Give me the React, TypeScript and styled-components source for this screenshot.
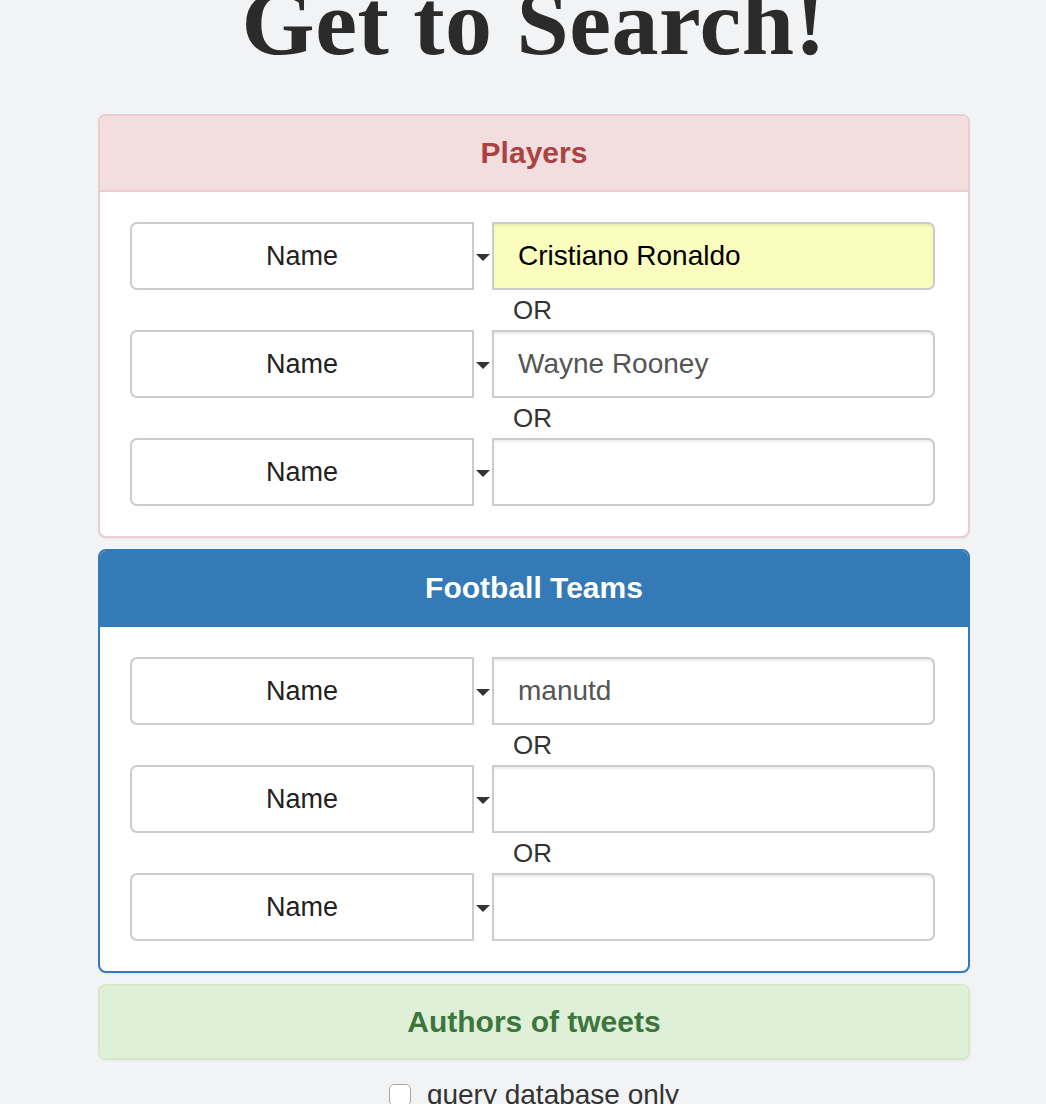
import React from 'react';
import styled, { createGlobalStyle } from 'styled-components';

type Tone = 'danger' | 'primary' | 'success';

const tones: Record<Tone, { border: string; head: string; text: string }> = {
  danger: { border: '#ebccd1', head: '#f2dede', text: '#a94442' },
  primary: { border: '#337ab7', head: '#337ab7', text: '#ffffff' },
  success: { border: '#d6e9c6', head: '#dff0d8', text: '#3c763d' },
};

interface Row {
  value: string;
  autofill?: boolean;
}

const players: Row[] = [{ value: 'Cristiano Ronaldo', autofill: true }, { value: 'Wayne Rooney' }, { value: '' }];
const teams: Row[] = [{ value: 'manutd' }, { value: '' }, { value: '' }];

const SearchRows: React.FC<{ rows: Row[] }> = ({ rows }) => (
  <Body>
    {rows.map((row, i) => (
      <React.Fragment key={i}>
        {i > 0 && <Or>OR</Or>}
        <FieldRow>
          <Select>Name</Select>
          <Caret />
          <Input $autofill={row.autofill} defaultValue={row.value} />
        </FieldRow>
      </React.Fragment>
    ))}
  </Body>
);

const App: React.FC = () => {
  return (
    <>
      <GlobalStyle />
      <Page>
        <Title>Get to Search!</Title>
        <Panel $tone="danger">
          <PanelHeading $tone="danger">Players</PanelHeading>
          <SearchRows rows={players} />
        </Panel>
        <Panel $tone="primary">
          <PanelHeading $tone="primary">Football Teams</PanelHeading>
          <SearchRows rows={teams} />
        </Panel>
        <Panel $tone="success" $collapsed>
          <PanelHeading $tone="success" $collapsed>
            Authors of tweets
          </PanelHeading>
        </Panel>
        <CheckLine>
          <Box type="checkbox" />
          query database only
        </CheckLine>
      </Page>
    </>
  );
};

export default App;

const GlobalStyle = createGlobalStyle`
  html, body {
    margin: 0;
    padding: 0;
    background: #f2f3f5;
  }
  body {
    font-family: "Liberation Sans", Arial, sans-serif;
    color: #333333;
    overflow: hidden;
  }
`;

const Page = styled.div`
  width: 872px;
  margin-left: 98px;
  display: flex;
  flex-direction: column;
`;

const Title = styled.h1`
  margin: -24px 0 46px;
  font-family: "Liberation Serif", "Times New Roman", serif;
  font-size: 94px;
  line-height: 92px;
  font-weight: 700;
  color: #2b2b2b;
  text-align: center;
  letter-spacing: 0.5px;
`;

const Panel = styled.div<{ $tone: Tone; $collapsed?: boolean }>`
  flex-shrink: 0;
  display: flex;
  flex-direction: column;
  border: 2px solid ${(p) => tones[p.$tone].border};
  border-radius: 8px;
  background: #ffffff;
  overflow: hidden;
  margin-bottom: ${(p) => (p.$collapsed ? '20px' : '11px')};
  box-shadow: 0 1px 2px rgba(0, 0, 0, 0.05);
`;

const PanelHeading = styled.div<{ $tone: Tone; $collapsed?: boolean }>`
  height: ${(p) => (p.$collapsed ? '72px' : '74px')};
  display: flex;
  align-items: center;
  justify-content: center;
  background: ${(p) => tones[p.$tone].head};
  color: ${(p) => tones[p.$tone].text};
  border-bottom: ${(p) => (p.$collapsed ? 'none' : `2px solid ${tones[p.$tone].border}`)};
  font-size: 30px;
  font-weight: 700;
`;

const Body = styled.div`
  display: flex;
  flex-direction: column;
  padding: 30px 33px 30px 30px;
`;

const FieldRow = styled.div`
  display: flex;
  align-items: center;
  height: 68px;
`;

const Select = styled.div`
  box-sizing: border-box;
  width: 344px;
  height: 68px;
  display: flex;
  align-items: center;
  justify-content: center;
  background: #ffffff;
  border: 2px solid #cccccc;
  border-radius: 7px 0 0 7px;
  font-size: 27px;
  color: #222222;
`;

const Caret = styled.span`
  width: 18px;
  display: flex;
  justify-content: center;
  padding-top: 2px;

  &::before {
    content: '';
    width: 0;
    height: 0;
    border-left: 7px solid transparent;
    border-right: 7px solid transparent;
    border-top: 7px solid #333333;
  }
`;

const Input = styled.input<{ $autofill?: boolean }>`
  box-sizing: border-box;
  flex: 1;
  min-width: 0;
  height: 68px;
  margin: 0;
  padding: 0 24px;
  border: 2px solid #cccccc;
  border-radius: 0 7px 7px 0;
  background: ${(p) => (p.$autofill ? '#fafdbe' : '#ffffff')};
  box-shadow: inset 0 2px 2px rgba(0, 0, 0, 0.075);
  font-family: "Liberation Sans", Arial, sans-serif;
  font-size: 28px;
  color: ${(p) => (p.$autofill ? '#000000' : '#555555')};
  outline: none;
`;

const Or = styled.div`
  height: 40px;
  display: flex;
  align-items: center;
  justify-content: center;
  font-size: 26px;
  color: #333333;
`;

const CheckLine = styled.label`
  flex-shrink: 0;
  display: flex;
  align-items: center;
  justify-content: center;
  gap: 16px;
  font-size: 28px;
  color: #333333;
  height: 30px;
`;

const Box = styled.input`
  width: 22px;
  height: 22px;
  margin: 0;
  appearance: none;
  border: 1px solid #a8a8a8;
  border-radius: 5px;
  background: #ffffff;
`;
